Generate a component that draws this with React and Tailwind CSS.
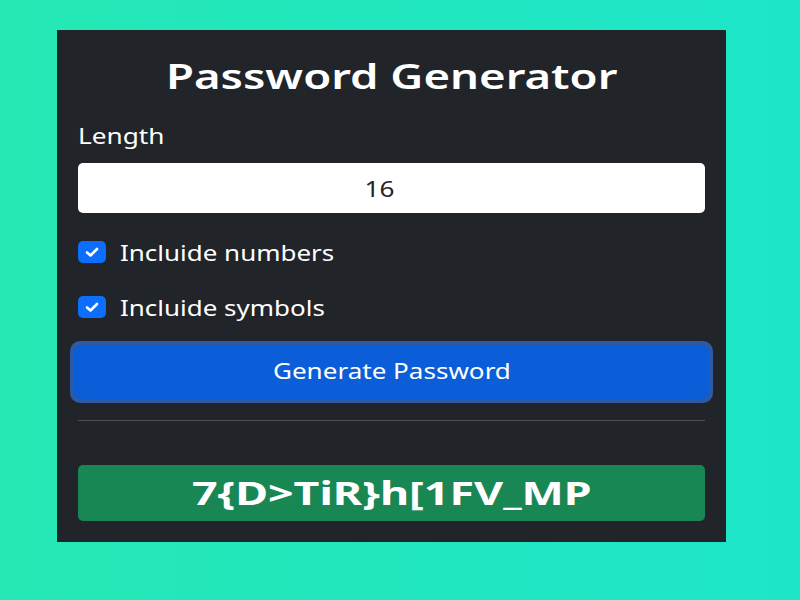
function Check() {
  return (
    <div className="w-[28px] h-[22px] bg-[#0d6efd] rounded-[5px] flex items-center justify-center shrink-0">
      <svg width="14" height="11" viewBox="0 0 14 11">
        <path d="M2 5.5 L5.5 8.5 L12 2" fill="none" stroke="white" strokeWidth="2.6" strokeLinecap="round" strokeLinejoin="round" />
      </svg>
    </div>
  );
}

export default function App() {
  const font = { fontFamily: '"Noto Sans", "Open Sans", sans-serif' };
  return (
    <div
      className="w-[800px] h-[600px] bg-gradient-to-r from-[#25e8b4] to-[#1de5c9] pt-[30px] pl-[57px]"
      style={font}
    >
      <div className="w-[669px] h-[512px] bg-[#212529] px-[21px] pt-[14px] flex flex-col">
        <h1 className="text-center text-white text-[35px] font-semibold leading-[64px]">
          <span className="inline-block scale-x-[1.3]">Password Generator</span>
        </h1>
        <label className="text-white text-[22px] leading-[28px] mt-[13px]">
          <span className="inline-block origin-left scale-x-[1.19]">Length</span>
        </label>
        <div className="mt-[14px] h-[50px] bg-white rounded-[5px] flex items-center justify-center pr-[24px] text-[22px] text-[#212529]">
          <span className="inline-block scale-x-[1.19]">16</span>
        </div>
        <div className="flex items-center mt-[28px] h-[22px]">
          <Check />
          <span className="text-white text-[22px] ml-[14px] inline-block origin-left scale-x-[1.18]">Incluide numbers</span>
        </div>
        <div className="flex items-center mt-[33px] h-[22px]">
          <Check />
          <span className="text-white text-[22px] ml-[14px] inline-block origin-left scale-x-[1.18]">Incluide symbols</span>
        </div>
        <div className="mt-[23px] -mx-[8px] p-[4px] rounded-[10px] bg-[#2c5aa6]">
          <div className="h-[54px] bg-[#0b5ed7] rounded-[7px] flex items-center justify-center text-white text-[21px]">
            <span className="inline-block scale-x-[1.24]">Generate Password</span>
          </div>
        </div>
        <div className="mt-[17px] h-px bg-[#4d5154]"></div>
        <div className="mt-[44px] h-[56px] bg-[#198754] rounded-[5px] flex items-center justify-center text-white text-[32px] font-bold">
          <span className="inline-block scale-x-[1.4]">7{"{"}D&gt;TiR{"}"}h[1FV_MP</span>
        </div>
      </div>
    </div>
  );
}
